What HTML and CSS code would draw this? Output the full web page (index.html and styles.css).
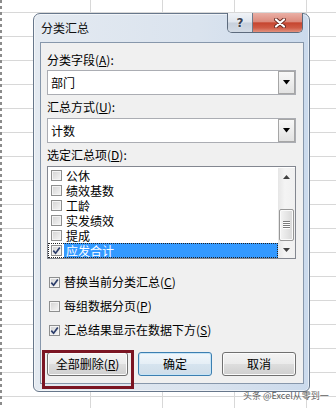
FILE: index.html
```html
<!DOCTYPE html>
<html lang="zh-CN">
<head>
<meta charset="utf-8">
<title>分类汇总</title>
<link rel="stylesheet" href="styles.css">
</head>
<body>
<div class="sheet"></div>

<div class="dialog">
  <div class="titlebar">
    <span class="title">分类汇总</span>
    <div class="capbtns">
      <span class="help">?</span>
      <span class="close">
        <svg width="12" height="10" viewBox="0 0 12 10">
          <path d="M2 1.5 L10 8.5 M10 1.5 L2 8.5" stroke="#6a2b22" stroke-width="4" stroke-linecap="round"/>
          <path d="M2 1.5 L10 8.5 M10 1.5 L2 8.5" stroke="#ffffff" stroke-width="2.2" stroke-linecap="round"/>
        </svg>
      </span>
    </div>
  </div>

  <div class="content">
    <div class="lbl">分类字段(<u>A</u>):</div>
    <div class="combo">
      <span class="val">部门</span>
      <span class="drop"><svg width="7" height="5" viewBox="0 0 7 5"><path d="M0 0 H7 L3.5 4.5 Z" fill="#000"/></svg></span>
    </div>

    <div class="lbl gap4">汇总方式(<u>U</u>):</div>
    <div class="combo gap3">
      <span class="val">计数</span>
      <span class="drop"><svg width="7" height="5" viewBox="0 0 7 5"><path d="M0 0 H7 L3.5 4.5 Z" fill="#000"/></svg></span>
    </div>

    <div class="lbl gap4">选定汇总项(<u>D</u>):</div>
    <div class="list">
      <div class="items">
        <div class="item"><span class="cb"></span><span class="txt">公休</span></div>
        <div class="item"><span class="cb"></span><span class="txt">绩效基数</span></div>
        <div class="item"><span class="cb"></span><span class="txt">工龄</span></div>
        <div class="item"><span class="cb"></span><span class="txt">实发绩效</span></div>
        <div class="item"><span class="cb"></span><span class="txt">提成</span></div>
        <div class="item sel"><span class="cb"><svg width="9" height="9" viewBox="0 0 9 9"><path d="M1.3 4.6 L3.6 7.2 L7.8 1.4" fill="none" stroke="#2c3d6b" stroke-width="1.7"/></svg></span><span class="txt">应发合计</span></div>
      </div>
      <div class="sb">
        <div class="arrow"><svg width="7" height="4" viewBox="0 0 7 4"><path d="M0 4 H7 L3.5 0 Z" fill="#404040"/></svg></div>
        <div class="track"><div class="thumb"><span class="grip"></span></div></div>
        <div class="arrow"><svg width="7" height="4" viewBox="0 0 7 4"><path d="M0 0 H7 L3.5 4 Z" fill="#404040"/></svg></div>
      </div>
    </div>

    <div class="opts">
      <div class="opt"><span class="cb"><svg width="9" height="9" viewBox="0 0 9 9"><path d="M1.3 4.6 L3.6 7.2 L7.8 1.4" fill="none" stroke="#2c3d6b" stroke-width="1.7"/></svg></span><span>替换当前分类汇总(<u>C</u>)</span></div>
      <div class="opt"><span class="cb"></span><span>每组数据分页(<u>P</u>)</span></div>
      <div class="opt"><span class="cb"><svg width="9" height="9" viewBox="0 0 9 9"><path d="M1.3 4.6 L3.6 7.2 L7.8 1.4" fill="none" stroke="#2c3d6b" stroke-width="1.7"/></svg></span><span>汇总结果显示在数据下方(<u>S</u>)</span></div>
    </div>

    <div class="btns">
      <span class="btn wide">全部删除(<u>R</u>)</span>
      <span class="btn default">确定</span>
      <span class="btn">取消</span>
    </div>
  </div>
</div>

<div class="annot"></div>
<div class="wm">头条 @Excel从零到一</div>
</body>
</html>
```

FILE: styles.css
```css
* { box-sizing: border-box; }
html, body { margin: 0; padding: 0; }
body {
  width: 336px;
  height: 408px;
  overflow: hidden;
  position: relative;
  background: #fff;
  font-family: "Noto Sans CJK SC", "Microsoft YaHei", sans-serif;
  font-size: 12px;
  color: #000;
}
u { text-decoration-thickness: 1px; text-underline-offset: 1px; }

.sheet {
  height: 408px;
  background-image:
    repeating-linear-gradient(to bottom, #8c8c8c 0 3px, transparent 3px 6px),
    repeating-linear-gradient(to right, #d8d8d8 0 1px, transparent 1px 72px),
    linear-gradient(to bottom, #d8d8d8 1px, transparent 1px);
  background-size: 2px 100%, 246px 100%, 100% 24px;
  background-position: 0 0, right top, 0 12px;
  background-repeat: no-repeat, no-repeat, repeat-y;
}

.dialog {
  position: absolute;
  left: 33px;
  top: 13px;
  width: 277px;
  height: 379px;
  border: 1px solid #67778b;
  border-radius: 7px 7px 6px 6px;
  background: linear-gradient(to right, #e4eaf1 0%, #dae3ee 60%, #cbdaec 100%);
  box-shadow: inset 0 0 0 1px rgba(255,255,255,0.55);
  padding: 0 5px 7px 6px;
  display: flex;
  flex-direction: column;
}
.titlebar {
  height: 28px;
  display: flex;
  align-items: center;
  padding-left: 1px;
}
.title { line-height: 16px; color: #111; }

.capbtns {
  position: absolute;
  top: -1px;
  right: 6px;
  height: 20px;
  display: flex;
  border: 1px solid #5d6b7d;
  border-top: none;
  border-radius: 0 0 5px 5px;
  overflow: hidden;
}
.help {
  width: 25px;
  border-right: 1px solid #6f7c8c;
  background: linear-gradient(#f0f3f7 0%, #dfe5ed 48%, #c7d0dc 52%, #d3dbe5 100%);
  display: flex;
  align-items: center;
  justify-content: center;
  font: bold 12px "DejaVu Sans", sans-serif;
  color: #3b4250;
  text-shadow: 0 0 2px #fff;
}
.close {
  width: 49px;
  background: linear-gradient(#eab0a6 0%, #dc8a7c 46%, #c6452f 52%, #cf5b45 78%, #e3927f 100%);
  display: flex;
  align-items: center;
  justify-content: center;
}
.close svg { margin-left: 5px; }

.content {
  flex: 1;
  background: #f0f0f0;
  border: 1px solid #8797ab;
  padding: 9px 7px 0 6px;
  display: flex;
  flex-direction: column;
}
.lbl { height: 16px; line-height: 16px; margin-top: 0; }
.gap4 { margin-top: 4px; }
.gap3 { margin-top: 3px; }

.combo {
  height: 25px;
  margin-top: 2px;
  background: #fff;
  border: 1px solid #abadb3;
  display: flex;
  align-items: center;
  padding-left: 3px;
}
.combo.gap3 { margin-top: 3px; }
.combo .val { flex: 1; line-height: 16px; }
.drop {
  width: 17px;
  height: 23px;
  border: 1px solid #a6a6a6;
  background: linear-gradient(#f8f8f8, #e2e2e2);
  display: flex;
  align-items: center;
  justify-content: center;
}

.list {
  height: 93px;
  margin-top: 3px;
  background: #fff;
  border: 1px solid #838790;
  padding-top: 1px;
  display: flex;
}
.items { flex: 1; }
.item {
  height: 15px;
  display: flex;
  align-items: center;
  padding-left: 3px;
  overflow: hidden;
}
.cb {
  width: 11px;
  height: 11px;
  flex: none;
  border: 1px solid #8e8f8f;
  background: linear-gradient(135deg, #d2d2d2, #f6f6f6);
  box-shadow: inset 0 0 0 1px #f4f4f4;
  display: flex;
  align-items: center;
  justify-content: center;
}
.cb svg { display: block; }
.txt {
  flex: 1;
  margin-left: 2px;
  padding-left: 2px;
  height: 15px;
  line-height: 15px;
}
.item.sel { outline: 1px dotted #222; outline-offset: -1px; }
.item.sel .txt { background: #3399ff; color: #fff; }

.sb {
  width: 17px;
  display: flex;
  flex-direction: column;
  background: linear-gradient(to right, #e6e6e6, #f4f4f4 40%, #f0f0f0);
}
.arrow {
  height: 17px;
  display: flex;
  align-items: center;
  justify-content: center;
}
.track { flex: 1; padding-top: 24px; }
.thumb {
  width: 15px;
  height: 32px;
  margin-left: 1px;
  border: 1px solid #979797;
  border-radius: 2px;
  background: linear-gradient(to right, #f4f4f4, #e6e6e6 50%, #d8d8d8);
  box-shadow: inset 0 0 0 1px #fafafa;
  display: flex;
  align-items: center;
  justify-content: center;
}
.grip {
  width: 7px;
  height: 8px;
  background: repeating-linear-gradient(to bottom, #7a7a7a 0 1px, #ffffff 1px 2px);
}

.opts {
  margin-top: 15px;
  display: flex;
  flex-direction: column;
  gap: 8px;
}
.opt {
  height: 16px;
  line-height: 16px;
  display: flex;
  align-items: center;
}
.opt .cb { margin-left: 2px; margin-right: 4px; }

.btns {
  margin-top: 14px;
  display: flex;
  gap: 10px;
}
.btn {
  width: 74px;
  height: 24px;
  border: 1px solid #707070;
  border-radius: 3px;
  background: linear-gradient(#f3f3f3 0%, #ebebeb 48%, #dddddd 52%, #cfcfcf 100%);
  box-shadow: inset 0 0 0 1px #fbfbfb;
  display: flex;
  align-items: center;
  justify-content: center;
  line-height: 16px;
}
.btn.wide { width: 81px; }
.btn.default {
  border-color: #3c7fb1;
  background: linear-gradient(#f1f7fb 0%, #e6eff6 48%, #d6e4ef 52%, #cfdde9 100%);
  box-shadow: inset 0 0 0 1px #c6e4f6;
}

.annot {
  position: absolute;
  left: 42px;
  top: 350px;
  width: 92px;
  height: 39px;
  border: 3px solid #7b1523;
}
.wm {
  position: absolute;
  left: 243px;
  top: 390px;
  font-size: 9px;
  line-height: 11px;
  color: #5e5e5e;
  white-space: nowrap;
}
```
